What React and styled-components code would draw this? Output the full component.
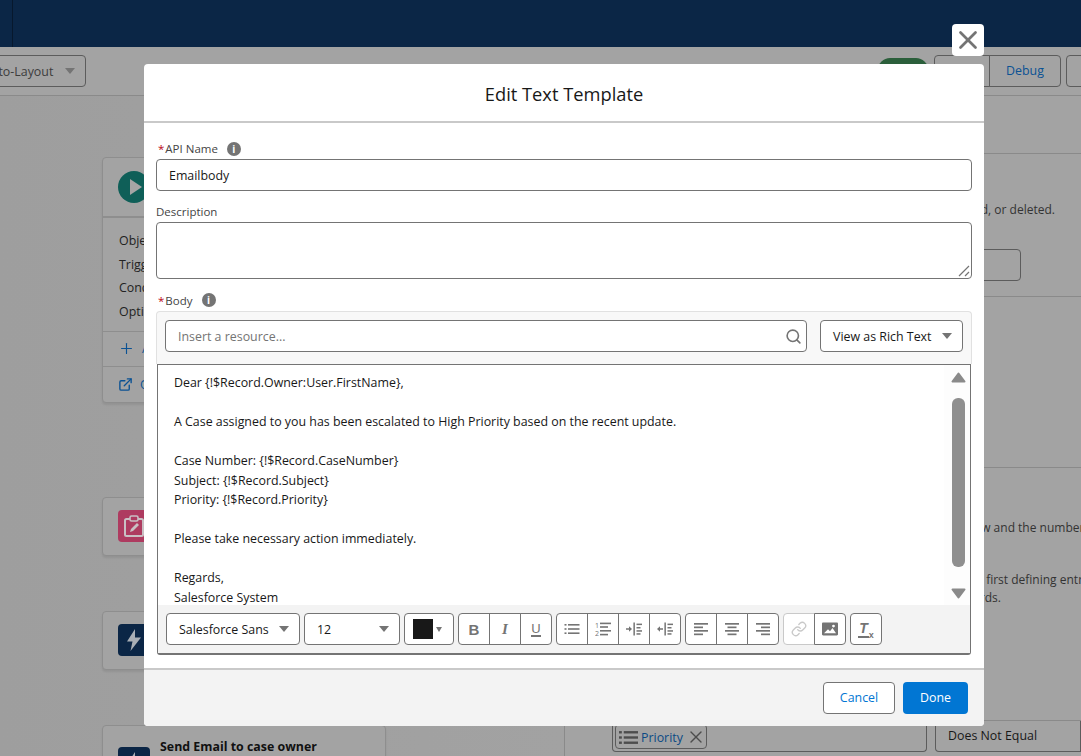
import React from 'react'
import styled, { createGlobalStyle } from 'styled-components'
import { Search, X, Link as LinkIcon, Plus, ExternalLink } from 'lucide-react'

const GlobalStyle = createGlobalStyle`
  html, body {
    margin: 0;
    padding: 0;
    background: #a0a0a0;
  }
  * {
    box-sizing: border-box;
  }
  body {
    font-family: "Open Sans", "Noto Sans", "Liberation Sans", sans-serif;
    font-size: 12.4px;
    color: #181818;
  }
`

const body = `Dear {!$Record.Owner:User.FirstName},

A Case assigned to you has been escalated to High Priority based on the recent update.

Case Number: {!$Record.CaseNumber}
Subject: {!$Record.Subject}
Priority: {!$Record.Priority}

Please take necessary action immediately.

Regards,
Salesforce System`

const ListIcon = () => (
  <Glyph viewBox="0 0 16 12">
    <rect x="0.5" y="1" width="2" height="1.6" />
    <rect x="4" y="1" width="11.5" height="1.6" />
    <rect x="0.5" y="5.2" width="2" height="1.6" />
    <rect x="4" y="5.2" width="11.5" height="1.6" />
    <rect x="0.5" y="9.4" width="2" height="1.6" />
    <rect x="4" y="9.4" width="11.5" height="1.6" />
  </Glyph>
)

const NumberedIcon = () => (
  <Glyph viewBox="0 0 16 14">
    <text x="0" y="6" fontSize="7" fontFamily="Open Sans">1</text>
    <text x="0" y="13.6" fontSize="7" fontFamily="Open Sans">2</text>
    <rect x="5" y="0.6" width="11" height="1.6" />
    <rect x="5" y="4.2" width="8" height="1.6" />
    <rect x="5" y="8" width="11" height="1.6" />
    <rect x="5" y="11.8" width="8" height="1.6" />
  </Glyph>
)

const IndentIcon = ({ out }) => (
  <Glyph viewBox="0 0 16 14">
    {out ? <path d="M0 7l3-2.8v2h3v1.6H3v2z" /> : <path d="M6 7L3 4.2v2H0v1.6h3v2z" />}
    <rect x="7.4" y="0.5" width="1.5" height="13" />
    <rect x="10.5" y="1.6" width="5.5" height="1.5" />
    <rect x="10.5" y="5" width="4" height="1.5" />
    <rect x="10.5" y="8.2" width="5.5" height="1.5" />
    <rect x="10.5" y="11.2" width="4" height="1.5" />
  </Glyph>
)

const AlignIcon = ({ side }) => {
  const short = side === 'left' ? 0 : side === 'center' ? 2.5 : 5
  return (
    <Glyph viewBox="0 0 16 13">
      <rect x="1" y="0.5" width="14" height="1.7" />
      <rect x={1 + short} y="4" width="9" height="1.7" />
      <rect x="1" y="7.5" width="14" height="1.7" />
      <rect x={1 + short} y="11" width="9" height="1.7" />
    </Glyph>
  )
}

const ImageIcon = () => (
  <Glyph viewBox="0 0 16 13">
    <path
      fillRule="evenodd"
      d="M1.2 0h13.6c.7 0 1.2.5 1.2 1.2v10.6c0 .7-.5 1.2-1.2 1.2H1.2C.5 13 0 12.5 0 11.8V1.2C0 .5.5 0 1.2 0zM2 10.8h12L10.5 5.4 8 8.8 6 6.7zM11.5 2.2a1.4 1.4 0 100 2.8 1.4 1.4 0 000-2.8z"
    />
  </Glyph>
)

const InfoIcon = () => (
  <InfoDot>
    <span>i</span>
  </InfoDot>
)

const PlayIcon = () => (
  <IconCircle>
    <svg width="14" height="18" viewBox="0 0 14 18">
      <path d="M1 1l12 8-12 8z" fill="#a5a5a5" />
    </svg>
  </IconCircle>
)

const ClipboardIcon = () => (
  <IconSquare $bg="#ae3b60">
    <svg width="22" height="22" viewBox="0 0 22 22">
      <rect x="2" y="4" width="18" height="17" rx="1.5" fill="none" stroke="#c9c0c4" strokeWidth="2" />
      <rect x="7" y="1" width="8" height="5" rx="1.5" fill="#ae3b60" stroke="#c9c0c4" strokeWidth="1.6" />
      <path d="M7 17l1-3 6-6 2 2-6 6z" fill="#c9c0c4" />
    </svg>
  </IconSquare>
)

const BoltIcon = () => (
  <IconSquare $bg="#0b2646">
    <svg width="16" height="22" viewBox="0 0 16 22">
      <path d="M9 0L1 12.5h5.5L4.5 22 15 8.5H9z" fill="#a9afb6" />
    </svg>
  </IconSquare>
)

const ScrollArrow = ({ down }) => (
  <ScrollArrowSvg viewBox="0 0 15 11">
    <path
      d={down ? 'M1.5 1.5h12l-6 8z' : 'M1.5 9.5h12l-6-8z'}
      fill="#8a8a8a"
      stroke="#8a8a8a"
      strokeWidth="2"
      strokeLinejoin="round"
    />
  </ScrollArrowSvg>
)

const Select = ({ children, width }) => (
  <SelectBox $width={width}>
    <span>{children}</span>
    <Caret />
  </SelectBox>
)

const App = () => {
  return (
    <Page>
      <GlobalStyle />
      <TopBar>
        <TopBarDivider />
      </TopBar>
      <Toolbar>
        <Select width={116}>Auto-Layout</Select>
        <ToolbarRight>
          <StatusPill>Active</StatusPill>
          <PageGroup>
            <PageButton $width={56}>Run</PageButton>
            <PageButton $width={72} $link>Debug</PageButton>
          </PageGroup>
          <PageButton $width={90} $single>Activate</PageButton>
        </ToolbarRight>
      </Toolbar>
      <Workspace>
        <Canvas>
          <Card>
            <CardHead>
              <PlayIcon />
              <CardTitle>Record-Triggered Flow</CardTitle>
            </CardHead>
            <CardRows>
              <CardRow>Object: Case</CardRow>
              <CardRow>Trigger: Record is Updated</CardRow>
              <CardRow>Conditions: 1 Selected</CardRow>
              <CardRow>Optimize for: Actions</CardRow>
            </CardRows>
            <CardAction>
              <Plus size={17} strokeWidth={1.6} />
              <span>Add Scheduled Paths</span>
            </CardAction>
            <CardAction $last>
              <ExternalLink size={15} strokeWidth={2.2} />
              <span>Open Flow Trigger Explorer</span>
            </CardAction>
          </Card>
          <Card $top={94}>
            <CardHead $small>
              <ClipboardIcon />
              <CardTitle>Update Records</CardTitle>
            </CardHead>
          </Card>
          <Card $top={55}>
            <CardHead $small>
              <BoltIcon />
              <CardTitle>Post to Chatter</CardTitle>
            </CardHead>
          </Card>
          <Card $top={55}>
            <CardHead $tight>
              <BoltIcon />
              <CardTitle $over>Send Email to case owner</CardTitle>
            </CardHead>
          </Card>
        </Canvas>
        <Panel>
          <PanelSection $height={58} />
          <PanelSection $height={143}>
            <PanelText $top={47} $pad={25}>
              Select the object whose records trigger the flow when created, updated, or deleted.
            </PanelText>
            <PanelBox />
          </PanelSection>
          <PanelSection $height={171} />
          <PanelSection $height={253}>
            <PanelText $top={51} $pad={93}>
              Choose how the conditions determine when to run the flow and the number of times it runs
            </PanelText>
            <PanelText $top={35} $pad={238}>
              Track changes to the record and first defining entry conditions that are met for
            </PanelText>
            <PanelText $top={1} $pad={327}>
              updates to records.
            </PanelText>
          </PanelSection>
          <ConditionRow>
            <FieldBox>
              <Chip>
                <ChipGlyph viewBox="0 0 16 12">
                  <rect x="0" y="0.6" width="2.4" height="2" />
                  <rect x="4" y="0.6" width="12" height="2" />
                  <rect x="0" y="5" width="2.4" height="2" />
                  <rect x="4" y="5" width="12" height="2" />
                  <rect x="0" y="9.4" width="2.4" height="2" />
                  <rect x="4" y="9.4" width="12" height="2" />
                </ChipGlyph>
                <ChipLabel>Priority</ChipLabel>
                <X size={20} strokeWidth={1.6} />
              </Chip>
            </FieldBox>
            <OperatorBox>Does Not Equal</OperatorBox>
          </ConditionRow>
        </Panel>
      </Workspace>

      <CloseButton aria-label="Close">
        <X size={30} strokeWidth={2.2} />
      </CloseButton>
      <Modal>
        <ModalHeader>Edit Text Template</ModalHeader>
        <ModalBody>
          <Label $height={21}>
            <Required>*</Required>API Name
            <InfoIcon />
          </Label>
          <TextInput>Emailbody</TextInput>
          <Label $height={31} $pad={10}>Description</Label>
          <TextArea>
            <ResizeGrip viewBox="0 0 12 12">
              <path d="M1 11L11 1M7 11l4-4" stroke="#747474" strokeWidth="1.2" fill="none" />
            </ResizeGrip>
          </TextArea>
          <Label $height={32} $pad={10}>
            <Required>*</Required>Body
            <InfoIcon />
          </Label>
          <ResourceBar>
            <ResourceInput>
              <span>Insert a resource...</span>
              <Search size={17} color="#747474" strokeWidth={2.3} />
            </ResourceInput>
            <Select width={143}>View as Rich Text</Select>
          </ResourceBar>
          <EditorBox>
            <EditorMain>
              <EditorText>{body}</EditorText>
              <ScrollBar>
                <ScrollArrow />
                <Thumb />
                <ScrollArrow down />
              </ScrollBar>
            </EditorMain>
            <FormatBar>
              <Select width={134}>Salesforce Sans</Select>
              <Select width={96}>12</Select>
              <ColorSelect>
                <Swatch />
                <SmallCaret />
              </ColorSelect>
              <ButtonGroup>
                <IconButton><BoldLetter>B</BoldLetter></IconButton>
                <IconButton><ItalicLetter>I</ItalicLetter></IconButton>
                <IconButton><UnderLetter>U</UnderLetter></IconButton>
              </ButtonGroup>
              <ButtonGroup>
                <IconButton><ListIcon /></IconButton>
                <IconButton><NumberedIcon /></IconButton>
                <IconButton><IndentIcon /></IconButton>
                <IconButton><IndentIcon out /></IconButton>
              </ButtonGroup>
              <ButtonGroup>
                <IconButton><AlignIcon side="left" /></IconButton>
                <IconButton><AlignIcon side="center" /></IconButton>
                <IconButton><AlignIcon side="right" /></IconButton>
              </ButtonGroup>
              <ButtonGroup>
                <IconButton $disabled><LinkIcon size={16} color="#c9c9c9" /></IconButton>
                <IconButton><ImageIcon /></IconButton>
              </ButtonGroup>
              <ButtonGroup>
                <IconButton>
                  <ClearMark>
                    <ClearT>T</ClearT>
                    <ClearX>x</ClearX>
                  </ClearMark>
                </IconButton>
              </ButtonGroup>
            </FormatBar>
          </EditorBox>
        </ModalBody>
        <ModalFooter>
          <CancelButton>Cancel</CancelButton>
          <DoneButton>Done</DoneButton>
        </ModalFooter>
      </Modal>
    </Page>
  )
}

const Page = styled.div`
  position: relative;
  width: 1081px;
  height: 756px;
  overflow: hidden;
  background: #a0a0a0;
  display: flex;
  flex-direction: column;
`

const TopBar = styled.div`
  height: 47px;
  flex: none;
  background: #0b2646;
  padding-left: 12px;
`

const TopBarDivider = styled.div`
  width: 1px;
  height: 47px;
  background: #07182d;
`

const Toolbar = styled.div`
  height: 49px;
  flex: none;
  margin: 0 -75px 0 -30px;
  padding-top: 8px;
  display: flex;
  justify-content: space-between;
  align-items: flex-start;
  background: #a3a3a3;
  border-bottom: 1px solid #8a8a8a;
`

const ToolbarRight = styled.div`
  display: flex;
  align-items: flex-start;
`

const StatusPill = styled.div`
  width: 50px;
  height: 24px;
  margin-top: 3px;
  margin-right: 6px;
  border-radius: 12px;
  background: #2b5f3b;
  color: #a3a3a3;
  text-align: center;
  line-height: 24px;
`

const PageGroup = styled.div`
  display: flex;
  margin-right: 5px;
`

const PageButton = styled.div`
  width: ${props => props.$width}px;
  height: 32px;
  line-height: 30px;
  text-align: center;
  border: 1px solid #5c5c5c;
  margin-left: ${props => (props.$link ? '-1px' : '0')};
  border-radius: ${props => (props.$link ? '0 4px 4px 0' : props.$single ? '4px' : '4px 0 0 4px')};
  color: ${props => (props.$link ? '#0b5294' : '#3d3d3d')};
`

const Workspace = styled.div`
  flex: 1;
  display: flex;
  min-height: 0;
`

const Canvas = styled.div`
  width: 564px;
  flex: none;
  padding: 61px 0 0 102px;
  background: linear-gradient(90deg, #9e9e9e, #a2a2a2);
`

const Card = styled.div`
  width: 284px;
  margin-top: ${props => props.$top || 0}px;
  background: #a3a3a3;
  border: 1px solid #8e8e8e;
  border-radius: 4px;
  box-shadow: 0 2px 2px rgba(0, 0, 0, 0.08);
`

const CardHead = styled.div`
  height: ${props => (props.$tight ? 80 : props.$small ? 57 : 58)}px;
  padding: ${props => (props.$tight ? '21px 15px 0' : '0 15px')};
  display: flex;
  align-items: ${props => (props.$tight ? 'flex-start' : 'center')};
  gap: 10px;
`

const CardTitle = styled.div`
  font-weight: 700;
  color: #111;
  margin-top: ${props => (props.$over ? '-9px' : '0')};
`

const IconCircle = styled.div`
  width: 32px;
  height: 32px;
  border-radius: 50%;
  background: #0f5f58;
  display: flex;
  align-items: center;
  justify-content: center;
  padding-left: 3px;
`

const IconSquare = styled.div`
  width: 32px;
  height: 32px;
  border-radius: 4px;
  background: ${props => props.$bg};
  display: flex;
  align-items: center;
  justify-content: center;
`

const CardRows = styled.div`
  border-top: 2px solid #8e8e8e;
  padding: 11px 16px 7px;
  border-bottom: 1px solid #8e8e8e;
`

const CardRow = styled.div`
  height: 23.7px;
  line-height: 23.7px;
  color: #222;
`

const CardAction = styled.div`
  height: 35px;
  padding: 0 15px;
  display: flex;
  align-items: center;
  gap: 7px;
  color: #0b5294;
  border-bottom: ${props => (props.$last ? 'none' : '1px solid #8e8e8e')};
`

const Panel = styled.div`
  flex: 1;
  min-width: 0;
  border-left: 1px solid #8a8a8a;
  background: #a3a3a3;
`

const PanelSection = styled.div`
  height: ${props => props.$height}px;
  border-bottom: 1px solid #8a8a8a;
  overflow: hidden;
`

const PanelText = styled.div`
  margin-top: ${props => props.$top}px;
  margin-left: ${props => props.$pad}px;
  white-space: nowrap;
  color: #333;
  font-size: 12px;
`

const PanelBox = styled.div`
  width: 300px;
  height: 32px;
  margin: 31px 0 0 156px;
  border: 1px solid #5c5c5c;
  border-radius: 4px;
`

const ConditionRow = styled.div`
  display: flex;
  gap: 8px;
  padding-left: 47px;
`

const FieldBox = styled.div`
  width: 315px;
  height: 31px;
  flex: none;
  padding: 3px 2px 0;
  border: 1px solid #5c5c5c;
  border-top: none;
  border-radius: 0 0 4px 4px;
`

const Chip = styled.div`
  width: 92px;
  height: 25px;
  display: flex;
  align-items: center;
  gap: 3px;
  padding: 1px 0 0 3px;
  color: #4d4d4d;
  border: 1px solid #5c5c5c;
  border-radius: 4px;
`

const ChipGlyph = styled.svg`
  width: 19px;
  height: 15px;
  flex: none;
  fill: #4d4d4d;
`

const ChipLabel = styled.span`
  color: #0b4a85;
  flex: none;
`

const OperatorBox = styled.div`
  flex: 1;
  height: 31px;
  padding-left: 12px;
  line-height: 30px;
  color: #181818;
  border: 1px solid #5c5c5c;
  border-top: none;
  border-left: 1px solid #5c5c5c;
  border-radius: 0 0 0 4px;
`

const CloseButton = styled.button`
  position: absolute;
  left: 952px;
  top: 24px;
  width: 32px;
  height: 32px;
  padding: 0;
  background: #fff;
  border: none;
  border-radius: 4px;
  color: #747474;
  display: flex;
  align-items: center;
  justify-content: center;
`

const Modal = styled.div`
  position: absolute;
  left: 144px;
  top: 64px;
  width: 840px;
  height: 662px;
  background: #fff;
  border-radius: 4px;
  display: flex;
  flex-direction: column;
  overflow: hidden;
`

const ModalHeader = styled.div`
  height: 59px;
  flex: none;
  line-height: 60px;
  text-align: center;
  font-size: 18.3px;
  color: #181818;
  border-bottom: 2px solid #c9c9c9;
`

const ModalBody = styled.div`
  flex: 1;
  padding: 15px 12px 0;
  min-height: 0;
`

const Label = styled.div`
  height: ${props => props.$height}px;
  padding-top: ${props => props.$pad || 0}px;
  display: flex;
  align-items: center;
  font-size: 11.5px;
  color: #444;
`

const Required = styled.span`
  color: #ba0517;
  margin: 0 1px 0 2px;
`

const InfoDot = styled.span`
  width: 14px;
  height: 14px;
  margin-left: 9px;
  border-radius: 50%;
  background: #747474;
  color: #fff;
  font-size: 10px;
  font-weight: 700;
  line-height: 14px;
  text-align: center;
`

const TextInput = styled.div`
  height: 32px;
  padding-left: 12px;
  line-height: 32px;
  border: 1px solid #747474;
  border-radius: 4px;
`

const TextArea = styled.div`
  position: relative;
  height: 57px;
  border: 1px solid #747474;
  border-radius: 4px;
`

const ResizeGrip = styled.svg`
  position: absolute;
  right: 1px;
  bottom: 1px;
  width: 12px;
  height: 12px;
`

const ResourceBar = styled.div`
  height: 53px;
  padding: 8px 8px 0;
  display: flex;
  gap: 13px;
  background: #f8f8f8;
  border: 1px solid #e1e1e1;
  border-bottom: none;
  border-radius: 4px 4px 0 0;
`

const ResourceInput = styled.div`
  flex: 1;
  height: 32px;
  padding: 0 4px 0 12px;
  display: flex;
  align-items: center;
  justify-content: space-between;
  background: #fff;
  color: #747474;
  border: 1px solid #747474;
  border-radius: 4px;
`

const SelectBox = styled.div`
  width: ${props => props.$width}px;
  height: 32px;
  flex: none;
  padding: 0 10px 0 12px;
  display: flex;
  align-items: center;
  justify-content: space-between;
  background: #fff;
  border: 1px solid #747474;
  border-radius: 4px;

  ${Toolbar} & {
    background: transparent;
    border-color: #5c5c5c;
    color: #3d3d3d;
  }
`

const Caret = styled.span`
  width: 0;
  height: 0;
  border-left: 5.5px solid transparent;
  border-right: 5.5px solid transparent;
  border-top: 6px solid #747474;
`

const SmallCaret = styled.span`
  width: 0;
  height: 0;
  border-left: 3.5px solid transparent;
  border-right: 3.5px solid transparent;
  border-top: 5px solid #747474;
`

const EditorBox = styled.div`
  margin: 0 1px;
  border: 1px solid #747474;
  border-bottom-width: 2px;
  border-radius: 0 0 3px 3px;
`

const EditorMain = styled.div`
  height: 240px;
  display: flex;
  overflow: hidden;
`

const EditorText = styled.div`
  flex: 1;
  padding: 8px 16px 0;
  white-space: pre-wrap;
  line-height: 19.5px;
`

const ScrollBar = styled.div`
  width: 26px;
  flex: none;
  padding: 7px 0 0 2px;
  display: flex;
  flex-direction: column;
  align-items: center;
  background: #fdfdfd;
`

const ScrollArrowSvg = styled.svg`
  width: 15px;
  height: 11px;
  flex: none;
`

const Thumb = styled.div`
  width: 13px;
  height: 169px;
  margin: 15px 0 21px;
  flex: none;
  border-radius: 6px;
  background: #8f8f8f;
`

const FormatBar = styled.div`
  height: 48px;
  padding: 8px;
  display: flex;
  gap: 4px;
  background: #f3f3f3;
`

const ColorSelect = styled.div`
  width: 50px;
  height: 32px;
  padding: 0 8px;
  display: flex;
  align-items: center;
  gap: 3px;
  background: #fff;
  border: 1px solid #747474;
  border-radius: 4px;
`

const Swatch = styled.span`
  width: 20px;
  height: 20px;
  background: #181818;
`

const ButtonGroup = styled.div`
  display: flex;
  height: 32px;
`

const IconButton = styled.div`
  width: 32px;
  height: 32px;
  margin-left: -1px;
  display: flex;
  align-items: center;
  justify-content: center;
  background: #fff;
  border: 1px solid ${props => (props.$disabled ? '#c9c9c9' : '#747474')};
  color: #747474;

  &:first-child {
    margin-left: 0;
    border-radius: 4px 0 0 4px;
  }
  &:last-child {
    border-radius: 0 4px 4px 0;
    border-left-color: #747474;
  }
  &:only-child {
    border-radius: 4px;
  }
`

const Glyph = styled.svg`
  width: 16px;
  height: 14px;
  fill: #747474;
`

const BoldLetter = styled.span`
  font-family: "Liberation Sans", sans-serif;
  font-weight: 700;
  font-size: 15px;
`

const ItalicLetter = styled.span`
  font-family: "Liberation Serif", serif;
  font-style: italic;
  font-weight: 700;
  font-size: 15px;
`

const UnderLetter = styled.span`
  font-family: "Liberation Sans", sans-serif;
  font-size: 13px;
  line-height: 13px;
  border-bottom: 2px solid #747474;
`

const ClearMark = styled.span`
  display: inline-flex;
  align-items: flex-end;
  font-family: "Liberation Sans", sans-serif;
  font-weight: 700;
`

const ClearT = styled.span`
  font-style: italic;
  font-size: 14px;
  line-height: 14px;
  padding: 0 1px 1px;
  border-bottom: 2px solid #747474;
`

const ClearX = styled.span`
  font-size: 9px;
  line-height: 9px;
  margin-bottom: -2px;
`

const ModalFooter = styled.div`
  height: 58px;
  flex: none;
  padding: 12px 16px 0;
  display: flex;
  justify-content: flex-end;
  gap: 8px;
  background: #f3f3f3;
  border-top: 2px solid #c9c9c9;
`

const CancelButton = styled.div`
  width: 72px;
  height: 32px;
  line-height: 30px;
  text-align: center;
  background: #fff;
  color: #0176d3;
  border: 1px solid #747474;
  border-radius: 4px;
`

const DoneButton = styled.div`
  width: 65px;
  height: 32px;
  line-height: 32px;
  text-align: center;
  background: #0176d3;
  color: #fff;
  border-radius: 4px;
`

export default App
